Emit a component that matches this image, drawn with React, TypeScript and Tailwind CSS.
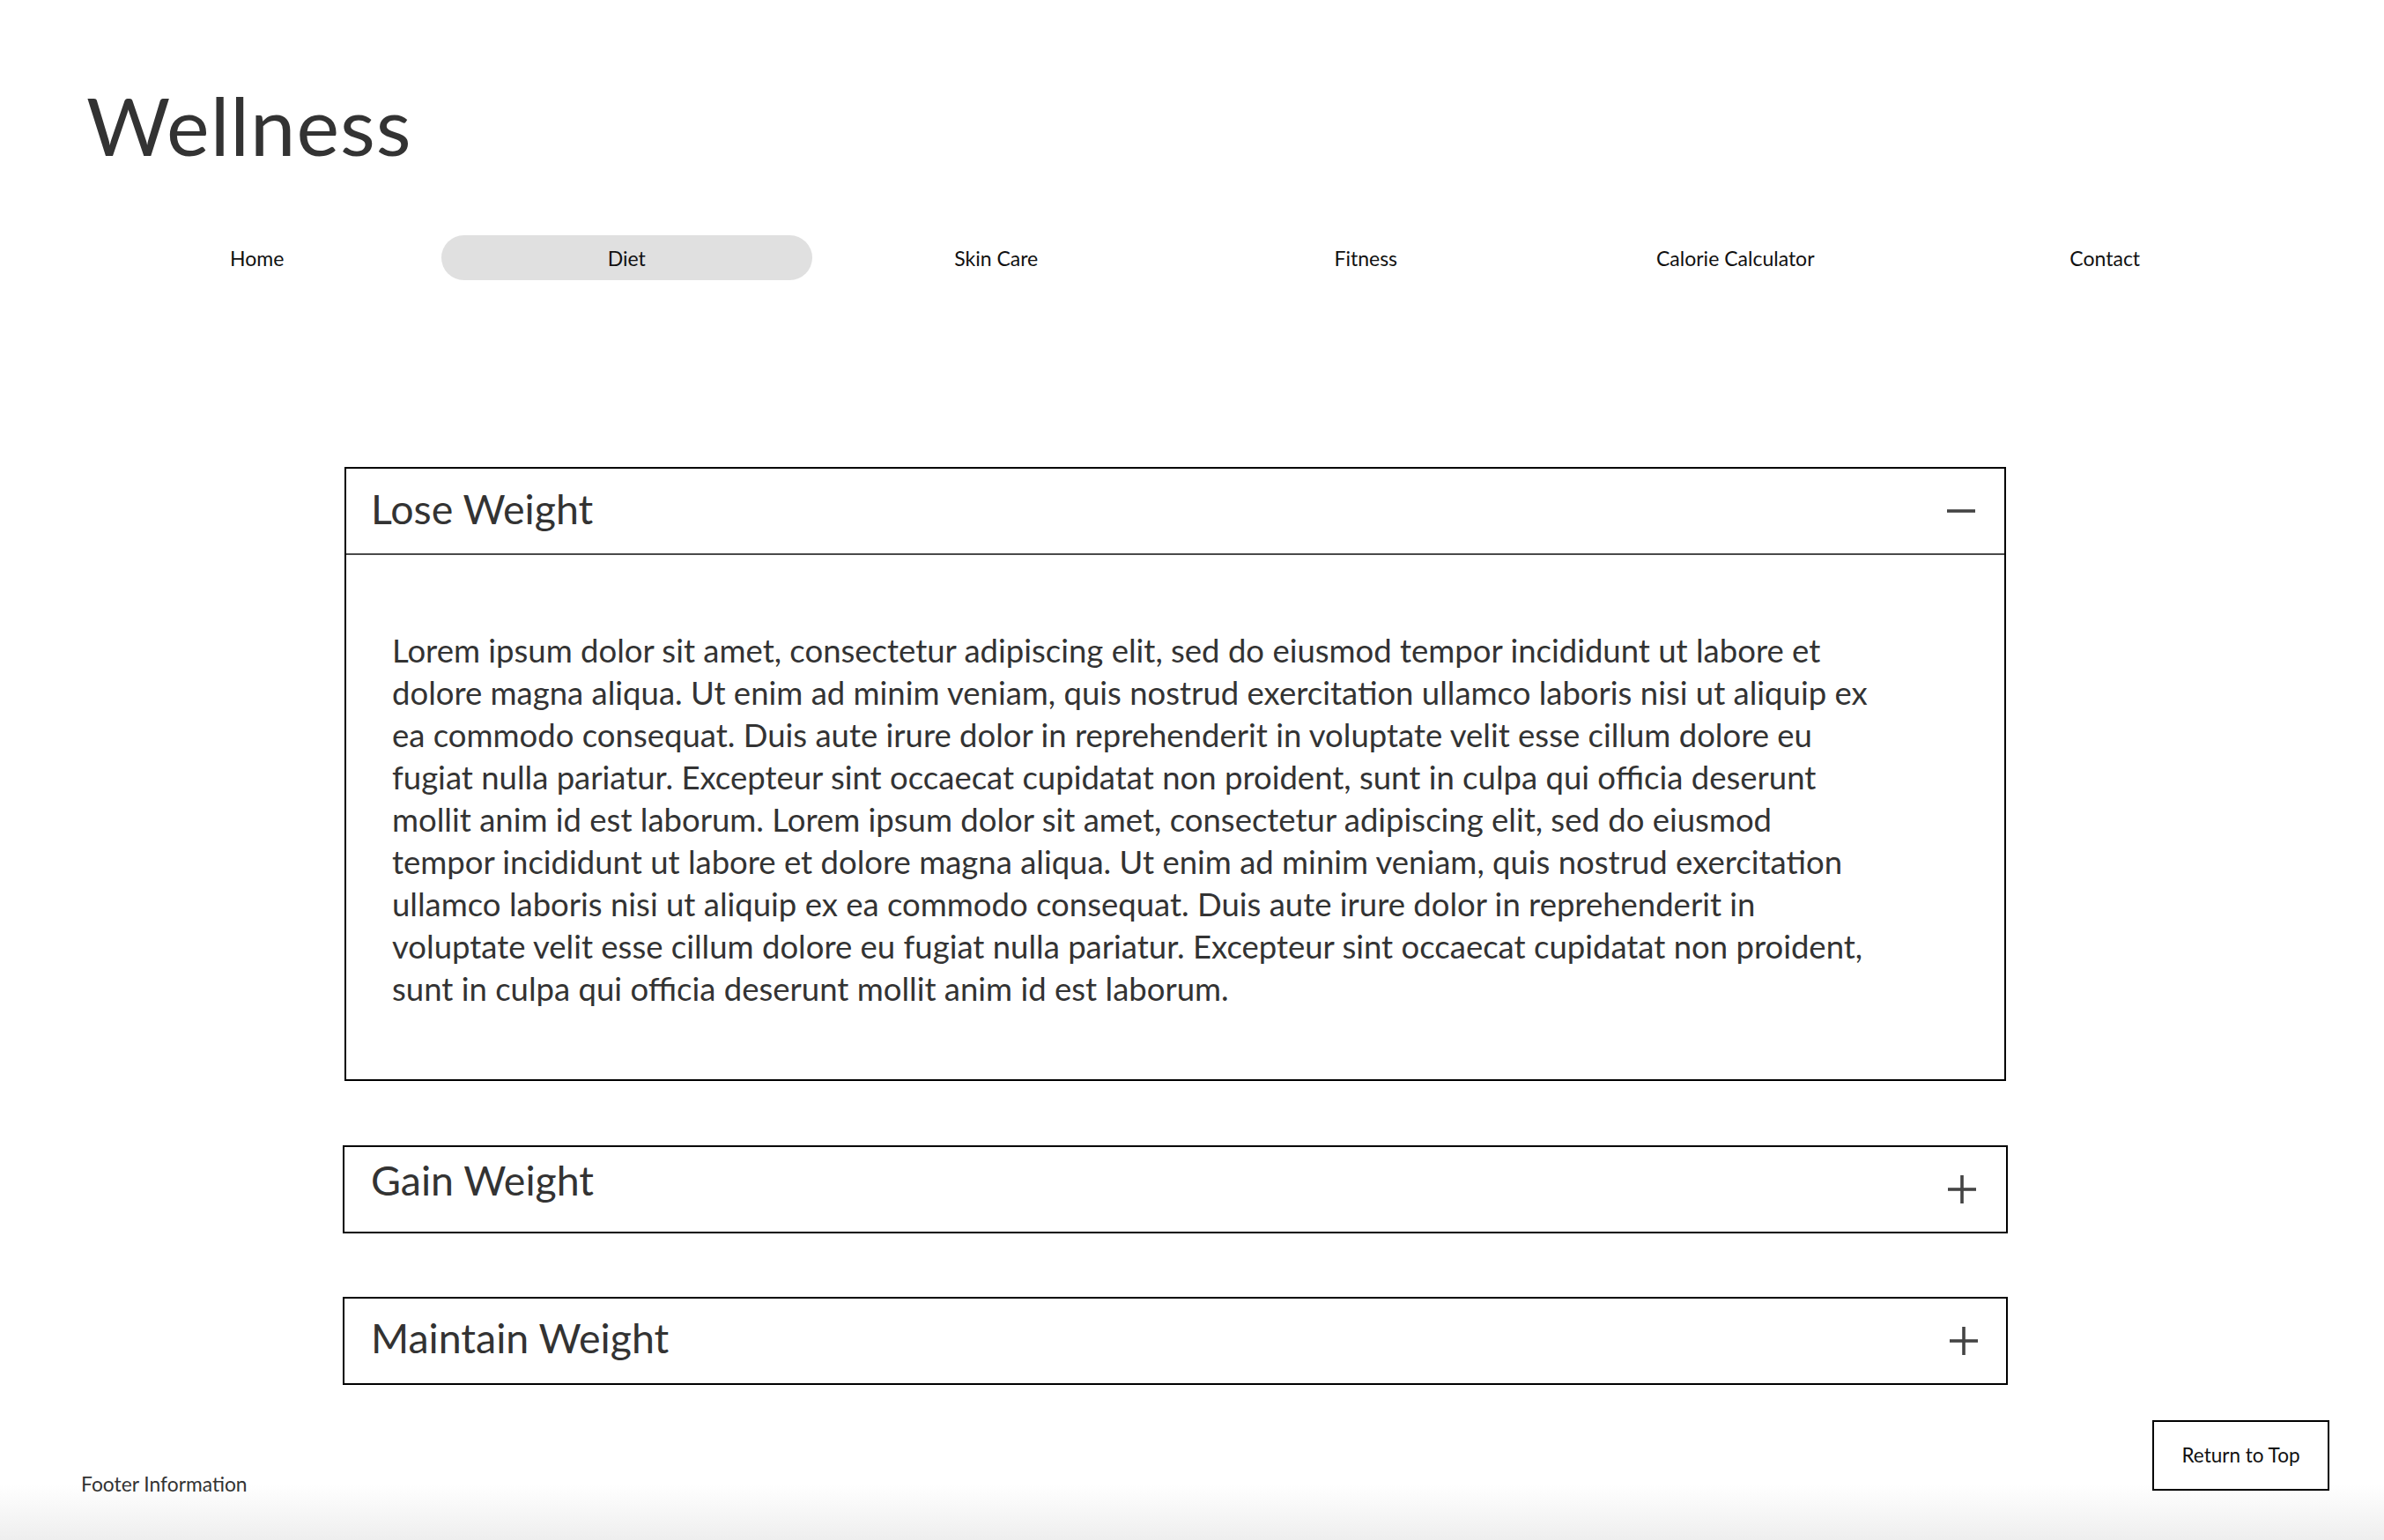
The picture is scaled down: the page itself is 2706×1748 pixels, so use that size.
import React from "react";

const lines = [
  "Lorem ipsum dolor sit amet, consectetur adipiscing elit, sed do eiusmod tempor incididunt ut labore et",
  "dolore magna aliqua. Ut enim ad minim veniam, quis nostrud exercitation ullamco laboris nisi ut aliquip ex",
  "ea commodo consequat. Duis aute irure dolor in reprehenderit in voluptate velit esse cillum dolore eu",
  "fugiat nulla pariatur. Excepteur sint occaecat cupidatat non proident, sunt in culpa qui officia deserunt",
  "mollit anim id est laborum. Lorem ipsum dolor sit amet, consectetur adipiscing elit, sed do eiusmod",
  "tempor incididunt ut labore et dolore magna aliqua. Ut enim ad minim veniam, quis nostrud exercitation",
  "ullamco laboris nisi ut aliquip ex ea commodo consequat. Duis aute irure dolor in reprehenderit in",
  "voluptate velit esse cillum dolore eu fugiat nulla pariatur. Excepteur sint occaecat cupidatat non proident,",
  "sunt in culpa qui officia deserunt mollit anim id est laborum.",
];

function Minus() {
  return (
    <svg width="32" height="32" viewBox="0 0 32 32" className="shrink-0">
      <line x1="0" y1="16" x2="32" y2="16" stroke="#444" strokeWidth="3.6" />
    </svg>
  );
}

function Plus() {
  return (
    <svg width="32" height="32" viewBox="0 0 32 32" className="shrink-0">
      <line x1="0" y1="16" x2="32" y2="16" stroke="#444" strokeWidth="3.6" />
      <line x1="16" y1="0" x2="16" y2="32" stroke="#444" strokeWidth="3.6" />
    </svg>
  );
}

const navItems = ["Home", "Diet", "Skin Care", "Fitness", "Calorie Calculator", "Contact"];

export default function App() {
  return (
    <div
      className="w-[2706px] h-[1748px] overflow-hidden flex flex-col bg-[linear-gradient(180deg,#ffffff_0px,#ffffff_1685px,#eeeeee_1748px)] text-[#333]"
      style={{ fontFamily: "Lato, 'Noto Sans', sans-serif" }}
    >
      <header className="pt-[96px] pl-[98px]">
        <h1 className="text-[92px] leading-[92px] font-normal tracking-[1px] text-[#333]">Wellness</h1>
      </header>

      <nav className="mt-[79px] pl-[82px] flex">
        {navItems.map((item) => (
          <div key={item} className="w-[419.5px] h-[51px] flex items-center justify-center">
            <div
              className={
                item === "Diet"
                  ? "w-[421px] h-[51px] pt-[2px] shrink-0 flex items-center justify-center rounded-full bg-[#e0e0e0] text-[23px] text-[#111]"
                  : "w-[421px] h-[51px] pt-[2px] shrink-0 flex items-center justify-center text-[23px] text-[#111]"
              }
            >
              {item}
            </div>
          </div>
        ))}
      </nav>

      <main className="mt-[212px] flex flex-col">
        <section className="ml-[391px] w-[1886px] border-2 border-black">
          <div className="h-[98px] flex items-start justify-between pl-[28px] pr-[33px] border-b-2 border-[#4a4a4a]">
            <h2 className="pt-[22px] text-[46.5px] leading-[47px] font-normal text-[#333]">Lose Weight</h2>
            <div className="self-center">
              <Minus />
            </div>
          </div>
          <div className="pt-[84px] pb-[79px] pl-[52px]">
            <p className="text-[36.5px] leading-[48px] text-[#333] whitespace-nowrap">
              {lines.map((l, i) => (
                <span key={i} className="block">
                  {l}
                </span>
              ))}
            </p>
          </div>
        </section>

        <section className="mt-[73px] ml-[389px] w-[1890px] h-[100px] border-2 border-black flex items-start justify-between pl-[30px] pr-[34px]">
          <h2 className="pt-[14px] text-[46.5px] leading-[47px] font-normal text-[#333]">Gain Weight</h2>
          <div className="self-center">
            <Plus />
          </div>
        </section>

        <section className="mt-[72px] ml-[389px] w-[1890px] h-[100px] border-2 border-black flex items-start justify-between pl-[30px] pr-[32px]">
          <h2 className="pt-[21px] text-[46.5px] leading-[47px] font-normal text-[#333]">Maintain Weight</h2>
          <div className="self-center">
            <Plus />
          </div>
        </section>
      </main>

      <footer className="mt-[40px] flex items-end justify-between pl-[92px] pr-[62px]">
        <div className="mb-[-3px] text-[22.8px] leading-[26px] text-[#333]">Footer Information</div>
        <button className="mb-[2px] w-[201px] h-[80px] border-2 border-black bg-white text-[22.5px] text-[#111]">
          Return to Top
        </button>
      </footer>
    </div>
  );
}
